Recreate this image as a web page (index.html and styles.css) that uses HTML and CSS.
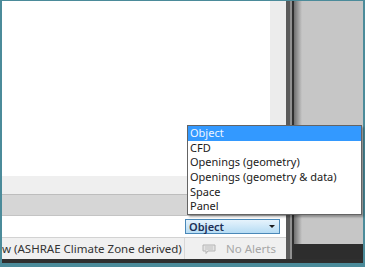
FILE: index.html
```html
<!DOCTYPE html>
<html>
<head>
    <title>Display Mode</title>
    <link rel="stylesheet" href="styles.css">
</head>
<body>
    <div class="frame">
        <div class="main">
            <div class="window">
                <div class="content">
                    <div class="canvas">
                        <div class="canvas-white"></div>
                        <div class="canvas-track"></div>
                    </div>
                    <div class="band-light"></div>
                    <div class="band-gray"></div>
                    <div class="row-white">
                        <div class="combo">
                            <span>Object</span>
                            <span class="arrow"></span>
                        </div>
                    </div>
                    <div class="statusbar">
                        <div class="status-text">w (ASHRAE Climate Zone derived)</div>
                        <div class="status-alerts">
                            <svg width="14" height="10" viewBox="0 0 14 10">
                                <path d="M1 1h12v6H6l-2 2.5V7H1z" fill="#e4e4e4" stroke="#b4b4b4" stroke-width="1"/>
                                <path d="M3 3h8M3 5h8" stroke="#c2c2c2" stroke-width="1"/>
                            </svg>
                            <span>No Alerts</span>
                        </div>
                    </div>
                </div>
                <div class="edge">
                    <div class="edge-a"></div>
                    <div class="edge-b"></div>
                    <div class="edge-c"></div>
                </div>
            </div>
            <div class="desktop">
                <div class="desk-gray"></div>
                <div class="desk-dark"></div>
            </div>
        </div>
        <div class="taskline"></div>

        <!-- open dropdown list of the combo -->
        <ul class="popup">
            <li class="selected">Object</li>
            <li>CFD</li>
            <li>Openings (geometry)</li>
            <li>Openings (geometry &amp; data)</li>
            <li>Space</li>
            <li>Panel</li>
        </ul>
    </div>
</body>
</html>
```

FILE: styles.css
```css
body {
    margin: 0;
    font-family: "Noto Sans", "Open Sans", sans-serif;
}
.frame {
    position: relative;
    width: 365px;
    height: 267px;
    box-sizing: border-box;
    padding: 1px 2px 4px 2px;
    background-color: #4b8b9a;
    display: flex;
    flex-direction: column;
}
.main {
    display: flex;
    height: 258px;
}
.window {
    display: flex;
}
.content {
    width: 284px;
    display: flex;
    flex-direction: column;
}
.canvas {
    display: flex;
    height: 175px;
}
.canvas-white {
    width: 268px;
    background-color: #ffffff;
}
.canvas-track {
    flex: 1;
    background-color: #ececec;
}
.band-light {
    height: 18px;
    background-color: #efefef;
    border-bottom: 1px solid #bdbdbd;
}
.band-gray {
    height: 20px;
    background-color: #d6d6d6;
    border-bottom: 1px solid #c4c4c4;
}
.row-white {
    height: 21px;
    background-color: #ffffff;
    display: flex;
    align-items: center;
    padding-left: 183px;
}
.combo {
    width: 95px;
    height: 15px;
    box-sizing: border-box;
    border: 1px solid #4a88b8;
    background: linear-gradient(#e6f3fc, #b6dcf4);
    display: flex;
    align-items: center;
    justify-content: space-between;
    padding: 0 4px 0 3px;
    font-size: 11px;
    font-weight: 600;
    color: #1c2f55;
}
.arrow {
    width: 0;
    height: 0;
    border-left: 3px solid transparent;
    border-right: 3px solid transparent;
    border-top: 3px solid #1a1a1a;
}
.statusbar {
    flex: 1;
    display: flex;
    background-color: #f0f0f0;
    border-top: 1px solid #d2d2d2;
    font-size: 11.5px;
}
.status-text {
    width: 182px;
    overflow: hidden;
    white-space: nowrap;
    color: #333333;
    line-height: 21px;
    border-right: 1px solid #d8d8d8;
}
.status-alerts {
    flex: 1;
    display: flex;
    align-items: center;
    gap: 10px;
    padding-left: 17px;
    color: #a6a6a6;
}
.edge {
    display: flex;
    width: 8px;
}
.edge-a {
    width: 4px;
    background-color: #5a5a5a;
}
.edge-b {
    width: 2px;
    background-color: #909090;
}
.edge-c {
    width: 2px;
    background-color: #2f2f2f;
}
.desktop {
    flex: 1;
    display: flex;
    flex-direction: column;
}
.desk-gray {
    flex: 1;
    background: linear-gradient(to right, #6f6f6f, #c6c6c6 8px);
}
.desk-dark {
    height: 15px;
    background-color: #2d2d2d;
}
.taskline {
    height: 4px;
    background-color: #2f2f2f;
}
.popup {
    position: absolute;
    left: 187px;
    top: 125px;
    width: 175px;
    margin: 0;
    padding: 0;
    list-style: none;
    box-sizing: border-box;
    background-color: #ffffff;
    border: 1px solid #646464;
    box-shadow: 2px 2px 2px rgba(0, 0, 0, 0.3);
    font-size: 11px;
    color: #1a1a1a;
}
.popup li {
    height: 14.7px;
    line-height: 14.7px;
    padding-left: 2px;
    white-space: nowrap;
}
.popup .selected {
    background-color: #3399ff;
    color: #eef5ff;
}
```
